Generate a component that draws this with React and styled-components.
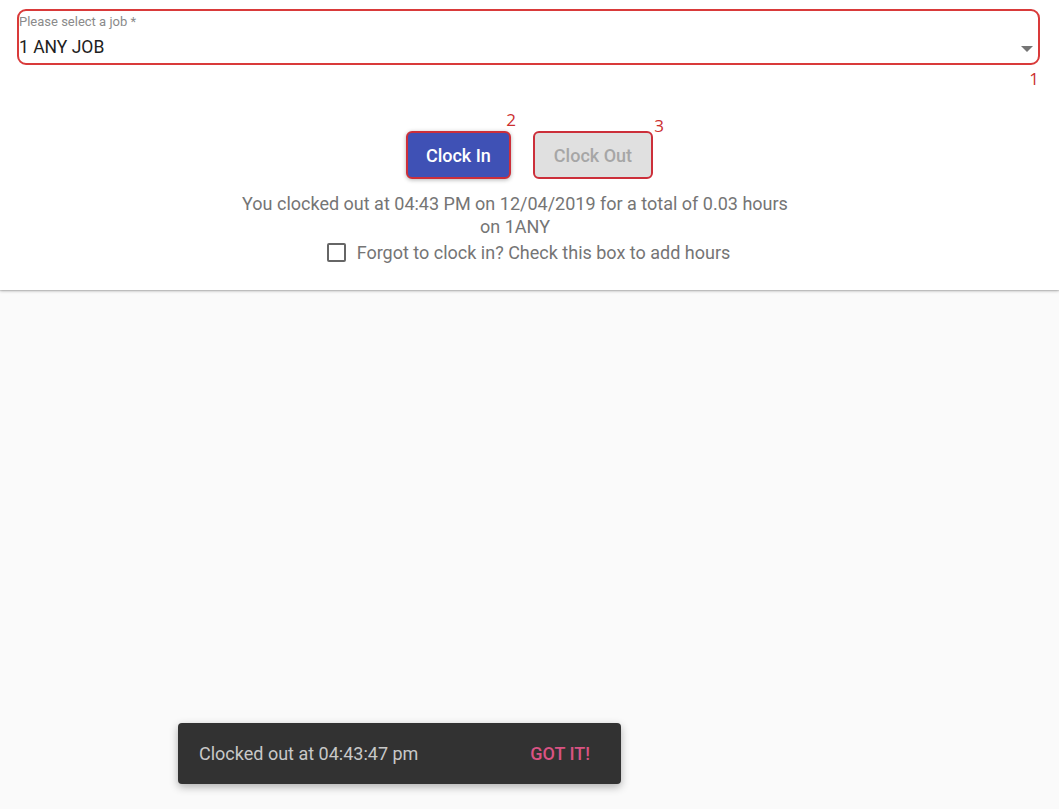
import React from 'react';
import styled, { createGlobalStyle } from 'styled-components';

const GlobalStyle = createGlobalStyle`
  html, body {
    margin: 0;
    padding: 0;
    background: #fafafa;
    font-family: Roboto, "Liberation Sans", sans-serif;
  }
  #root {
    min-height: 809px;
  }
`;

const Page = styled.div`
  width: 1059px;
  height: 809px;
  position: relative;
  background: #fafafa;
  overflow: hidden;
`;

const Card = styled.div`
  background: #fff;
  height: 290px;
  box-sizing: border-box;
  padding: 9px 19px 0 17px;
  box-shadow: 0 1px 3px rgba(0, 0, 0, 0.25), 0 1px 1px rgba(0, 0, 0, 0.1);
`;

const Marked = styled.div`
  position: relative;
`;

const Mark = styled.span`
  position: absolute;
  font-family: "Open Sans", "Liberation Sans", sans-serif;
  font-size: 17px;
  color: #cc2f2f;
  right: ${p => p.$right}px;
  top: ${p => p.$top}px;
`;

const SelectBox = styled.div`
  height: 56px;
  box-sizing: border-box;
  border: 2px solid #d93a3a;
  border-radius: 9px;
  padding: 3px 0 0 0;
  display: flex;
  align-items: flex-start;
  justify-content: space-between;
`;

const SelectText = styled.div`
  display: flex;
  flex-direction: column;
`;

const Label = styled.span`
  font-size: 13px;
  color: #8a8a8a;
  line-height: 16px;
`;

const Value = styled.span`
  font-size: 17.5px;
  color: #212121;
  line-height: 22px;
  margin-top: 6px;
`;

const Arrow = styled.svg`
  margin: 32px 5px 0 0;
`;

const Buttons = styled.div`
  display: flex;
  justify-content: center;
  gap: 22px;
  margin-top: 66px;
  padding-left: 2px;
`;

const Button = styled.button`
  height: 48px;
  padding: 0 ${p => (p.$primary ? 18 : 19)}px;
  border-radius: 6px;
  border: 2px solid #cc2f3a;
  background: ${p => (p.$primary ? '#3f51b5' : '#e0e0e0')};
  color: ${p => (p.$primary ? '#fff' : '#a6a6a6')};
  font-family: Roboto, "Liberation Sans", sans-serif;
  font-size: 18px;
  font-weight: 500;
  box-shadow: ${p => (p.$primary ? '0 1px 4px rgba(0,0,0,0.3)' : 'none')};
`;

const Info = styled.div`
  margin-top: 13px;
  display: flex;
  flex-direction: column;
  align-items: center;
  color: #757575;
  font-size: 18px;
  line-height: 23px;
`;

const Message = styled.p`
  margin: 0 27px 0 0;
  max-width: 570px;
  text-align: center;
`;

const CheckRow = styled.label`
  display: flex;
  align-items: center;
  gap: 11px;
  margin-top: 3px;
  font-size: 18px;
  color: #757575;
`;

const Box = styled.span`
  width: 15px;
  height: 15px;
  border: 2px solid #666;
  border-radius: 2px;
`;

const Snackbar = styled.div`
  position: absolute;
  left: 178px;
  top: 723px;
  width: 443px;
  height: 61px;
  box-sizing: border-box;
  background: #323232;
  border-radius: 4px;
  box-shadow: 0 3px 8px rgba(0, 0, 0, 0.3);
  display: flex;
  align-items: center;
  justify-content: space-between;
  padding: 0 31px 0 21px;
  font-size: 18px;
`;

const SnackText = styled.span`
  color: #c8c8c8;
`;

const SnackAction = styled.span`
  color: #d95382;
  font-weight: 500;
`;

const App = () => {
  return (
    <Page>
      <GlobalStyle />
      <Card>
        <Marked>
          <SelectBox>
            <SelectText>
              <Label>Please select a job *</Label>
              <Value>1 ANY JOB</Value>
            </SelectText>
            <Arrow width="12" height="6" viewBox="0 0 12 6">
              <path d="M0 0 L12 0 L6 6 Z" fill="#757575" />
            </Arrow>
          </SelectBox>
          <Mark $right={1} $top={58}>1</Mark>
        </Marked>

        <Buttons>
          <Marked>
            <Button $primary>Clock In</Button>
            <Mark $right={-5} $top={-23}>2</Mark>
          </Marked>
          <Marked>
            <Button>Clock Out</Button>
            <Mark $right={-11} $top={-17}>3</Mark>
          </Marked>
        </Buttons>

        <Info>
          <Message>You clocked out at 04:43 PM on 12/04/2019 for a total of 0.03 hours on 1ANY</Message>
          <CheckRow>
            <Box />
            Forgot to clock in? Check this box to add hours
          </CheckRow>
        </Info>
      </Card>

      <Snackbar>
        <SnackText>Clocked out at 04:43:47 pm</SnackText>
        <SnackAction>GOT IT!</SnackAction>
      </Snackbar>
    </Page>
  );
};

export default App;
